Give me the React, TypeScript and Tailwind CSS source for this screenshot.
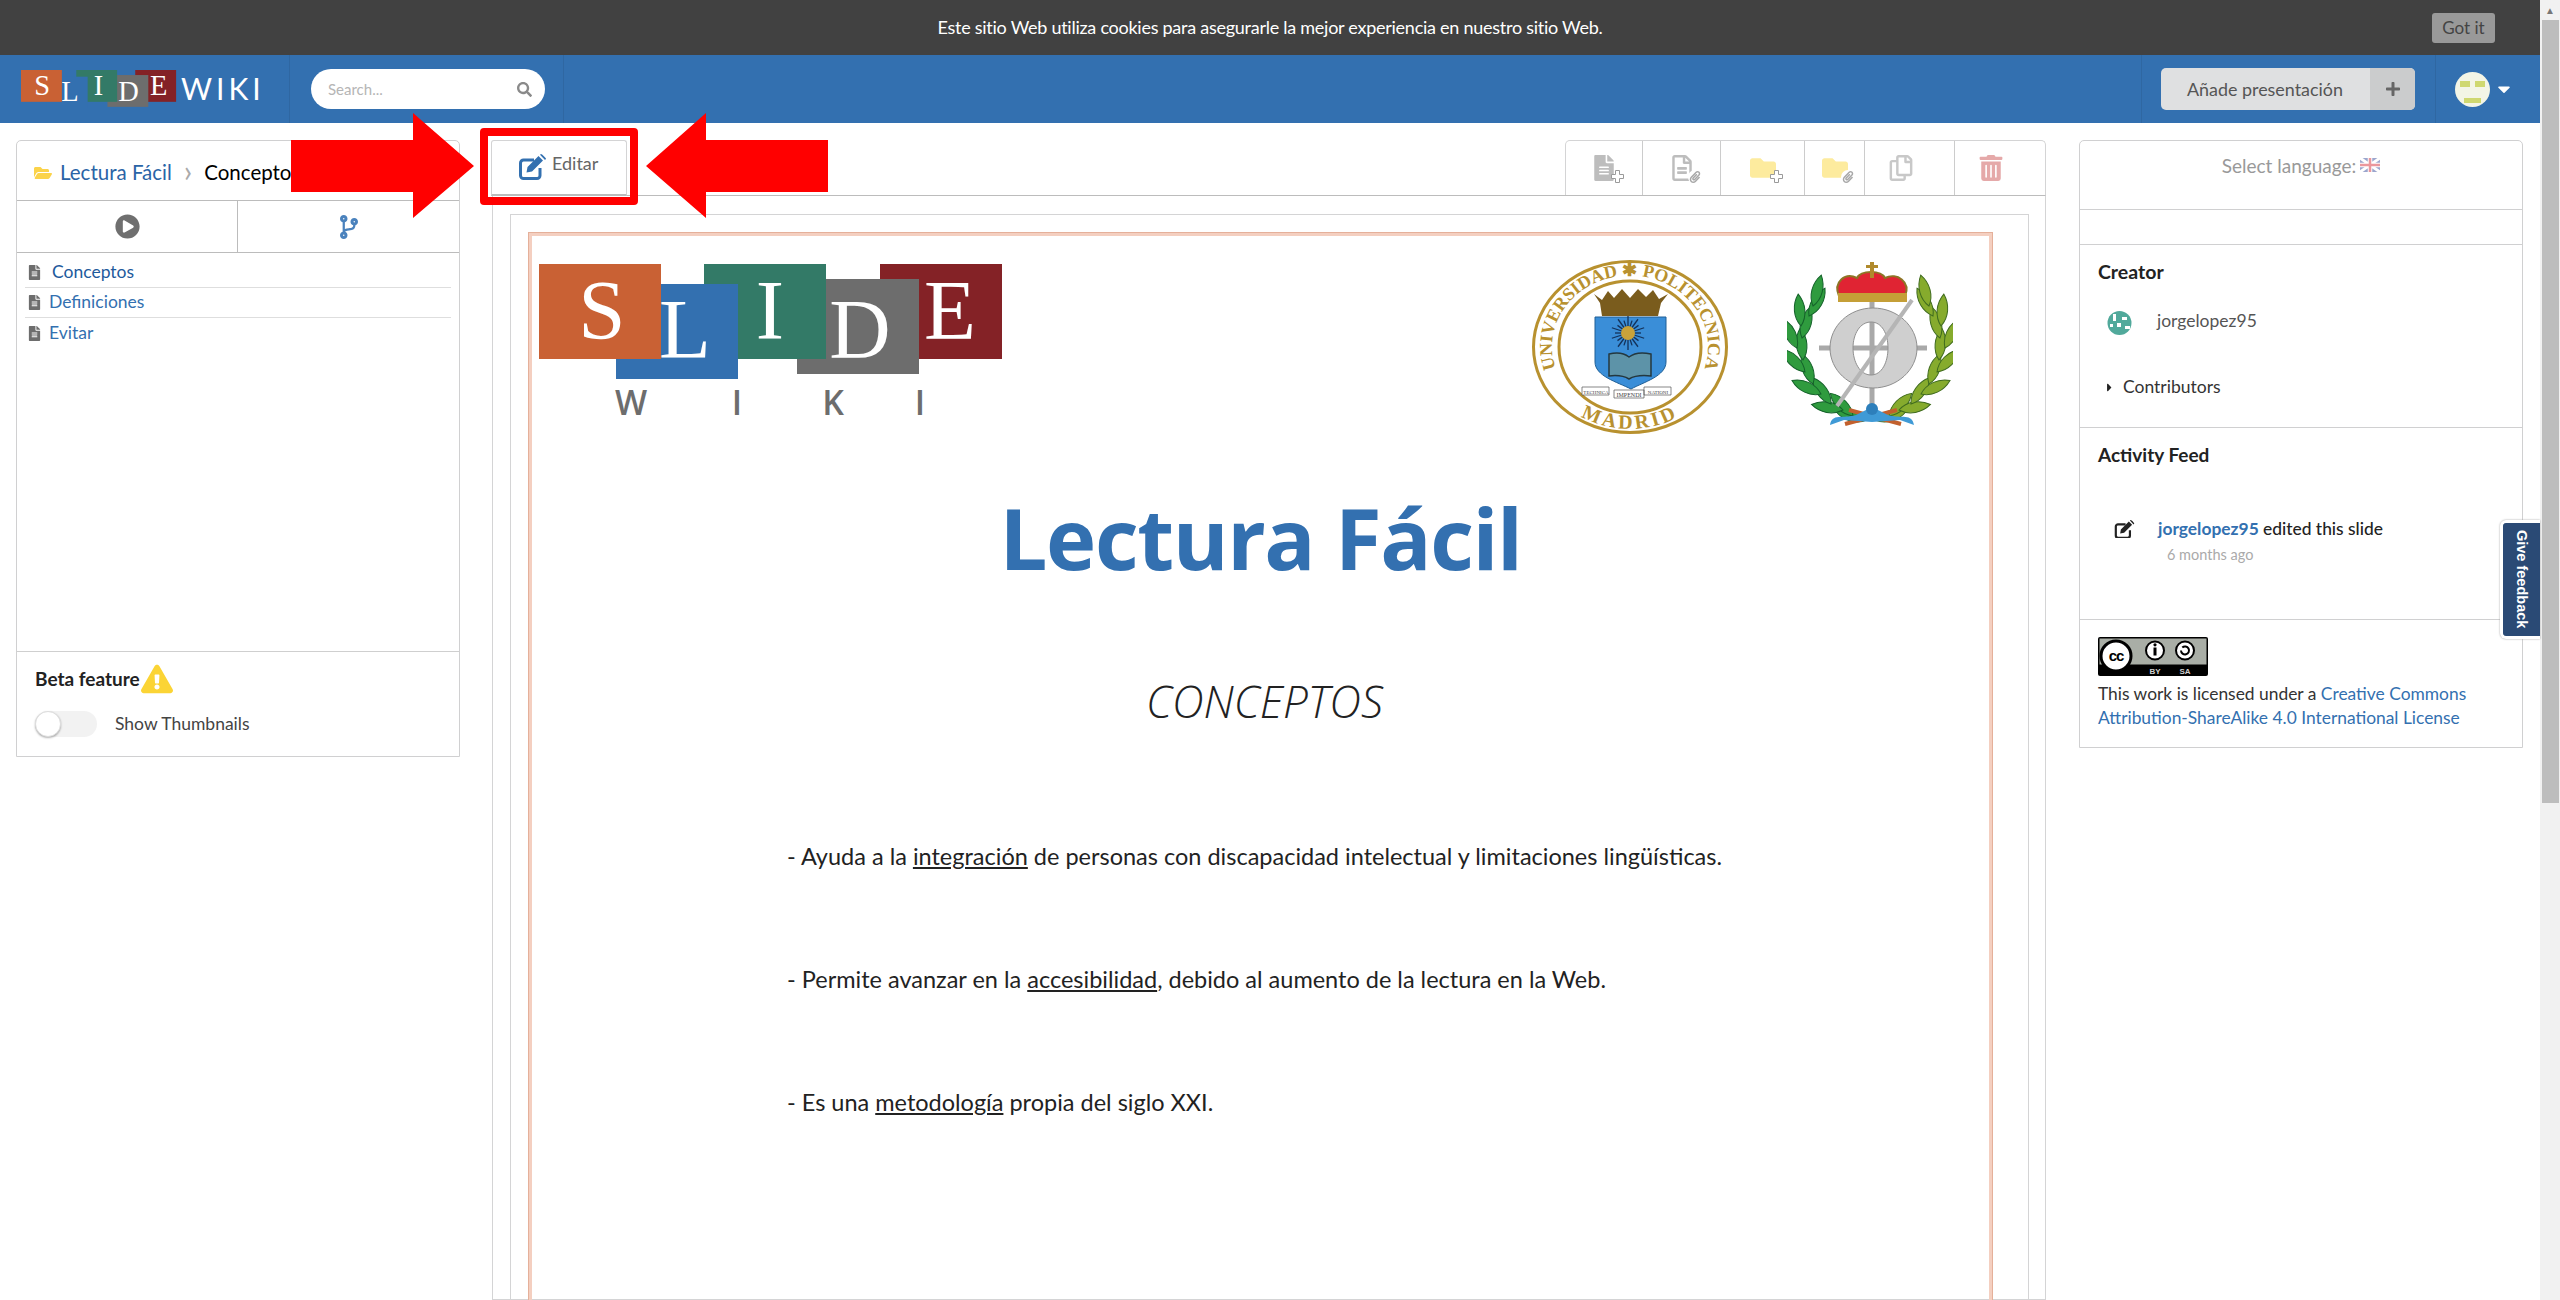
import {
  FaCaretDown,
  FaCaretRight,
  FaCodeBranch,
  FaExclamationTriangle,
  FaFileAlt,
  FaFolder,
  FaFolderOpen,
  FaPaperclip,
  FaPlayCircle,
  FaPlus,
  FaRegCopy,
  FaRegFileAlt,
  FaSearch,
  FaTrashAlt,
} from "react-icons/fa";

const blocks = [
  { x: 341, y: 0, fill: "#842226", l: "E", lx: 411, ly: 75 },
  { x: 258, y: 15, fill: "#6d6d6d", l: "D", lx: 321, ly: 94 },
  { x: 165, y: 0, fill: "#337a67", l: "I", lx: 231, ly: 75 },
  { x: 77, y: 20, fill: "#3370b0", l: "L", lx: 146, ly: 94 },
  { x: 0, y: 0, fill: "#c96134", l: "S", lx: 63, ly: 75 },
];

function Blocks() {
  return (
    <>
      {blocks.map((b) => (
        <g key={b.l}>
          <rect x={b.x} y={b.y} width="122" height="95" fill={b.fill} />
          <text
            x={b.lx}
            y={b.ly}
            fill="#fff"
            fontFamily="'Liberation Serif', serif"
            fontSize="85"
            textAnchor="middle"
          >
            {b.l}
          </text>
        </g>
      ))}
    </>
  );
}

function SmallLogo() {
  return (
    <svg width="243" height="38" viewBox="0 0 243 38">
      <g transform="scale(0.335)">
        <Blocks />
      </g>
      <text x="160" y="30" fill="#fff" fontFamily="Lato, sans-serif" fontSize="30" letterSpacing="4">
        WIKI
      </text>
    </svg>
  );
}

function BigLogo() {
  return (
    <svg width="463" height="155" viewBox="0 0 463 155">
      <Blocks />
      {[
        ["W", 92],
        ["I", 198],
        ["K", 294],
        ["I", 381],
      ].map(([l, x]) => (
        <text
          key={String(x)}
          x={x}
          y="151"
          fill="#6d6d6d"
          fontFamily="'Open Sans', sans-serif"
          fontSize="34"
          fontWeight="600"
          textAnchor="middle"
        >
          {l}
        </text>
      ))}
    </svg>
  );
}

function UpmSeal() {
  const rays = Array.from({ length: 20 }, (_, i) => i * 18);
  return (
    <svg width="196" height="175" viewBox="0 0 196 175">
      <ellipse cx="98" cy="87" rx="96.5" ry="85.5" fill="#fff" stroke="#b8912f" strokeWidth="3" />
      <ellipse cx="98" cy="87" rx="71" ry="66" fill="#fff" stroke="#b8912f" strokeWidth="3" />
      <defs>
        <path id="sealTop" d="M38 132A78 71 0 1 1 158 132" />
        <path id="sealBottom" d="M38 149A92 82 0 0 0 158 149" />
      </defs>
      <text fontFamily="'Liberation Serif', serif" fontSize="18" fontWeight="700" fill="#b8912f">
        <textPath href="#sealTop" startOffset="50%" textAnchor="middle">
          UNIVERSIDAD ✱ POLITECNICA
        </textPath>
      </text>
      <text fontFamily="'Liberation Serif', serif" fontSize="20" fontWeight="700" fill="#b8912f" letterSpacing="3">
        <textPath href="#sealBottom" startOffset="50%" textAnchor="middle">
          MADRID
        </textPath>
      </text>
      <path d="M62 34l8 6 6-9 6 7 8-9 8 9 8-9 8 8 7-7 6 9 9-5-7 9-3 13H70l-2-13z" fill="#7a5c1d" />
      <path d="M63 57h71v45c0 14-22 20-35 27-14-7-36-13-36-27z" fill="#3a8ed8" stroke="#1f5f96" strokeWidth="1" />
      {rays.map((r) => (
        <line
          key={r}
          x1="96"
          y1="73"
          x2="96"
          y2={r % 36 === 0 ? 56 : 60}
          stroke="#14325a"
          strokeWidth="1.3"
          transform={`rotate(${r} 96 73)`}
        />
      ))}
      <circle cx="96" cy="73" r="7" fill="#c8a23a" />
      <path d="M77 94c8-2 15-1 20 3 5-4 13-5 22-3v22c-9-1-17 0-22 3-5-3-12-4-20-3z" fill="#5d93a8" stroke="#24383f" strokeWidth="1.5" />
      <path d="M82 130h30v8H82zM50 127h27v8H50zM112 127h27v8h-27z" fill="#fff" stroke="#555" strokeWidth="0.7" />
      <text x="97" y="137" fontSize="6" textAnchor="middle" fill="#444" fontFamily="'Liberation Serif', serif">IMPENDI</text>
      <text x="64" y="134" fontSize="5" textAnchor="middle" fill="#444" fontFamily="'Liberation Serif', serif">TECHNICA</text>
      <text x="126" y="134" fontSize="5" textAnchor="middle" fill="#444" fontFamily="'Liberation Serif', serif">NATIONI</text>
    </svg>
  );
}

// leaves of one wreath branch: x, y, angle
const leaves = [
  [80, 160, -75],
  [66, 156, -45],
  [56, 150, -80],
  [44, 144, -35],
  [34, 134, -65],
  [26, 124, -20],
  [18, 112, -45],
  [16, 100, -5],
  [10, 88, -25],
  [15, 78, 15],
  [14, 66, -5],
  [22, 56, 30],
  [26, 46, 15],
];

function Branch({ fill, stroke, mirror }: { fill: string; stroke: string; mirror?: boolean }) {
  return (
    <g transform={mirror ? "translate(168 0) scale(-1 1)" : undefined}>
      {leaves.map(([x, y, r]) => (
        <path
          key={`${x}-${y}`}
          d="M0 0C-7-9-7-22 0-32 7-22 7-9 0 0z"
          fill={fill}
          stroke={stroke}
          strokeWidth="1"
          transform={`translate(${x} ${y}) rotate(${r})`}
        />
      ))}
    </g>
  );
}

function EiEmblem() {
  return (
    <svg width="166" height="167" viewBox="0 0 166 167">
      <Branch fill="#2f9b3e" stroke="#14612a" />
      <Branch fill="#86ab2d" stroke="#3f6b1f" mirror />
      <line x1="32" y1="88" x2="140" y2="88" stroke="#a9a9a9" strokeWidth="5" />
      <line x1="85" y1="40" x2="85" y2="148" stroke="#a9a9a9" strokeWidth="5" />
      <path
        fillRule="evenodd"
        d="M86 48c24 0 44 18 44 40s-20 40-44 40-43-18-43-40 19-40 43-40zm-2 14c-11 0-18 12-18 26s7 27 18 27 17-13 17-27-6-26-17-26z"
        fill="#cfcfcf"
        stroke="#8f8f8f"
        strokeWidth="1"
      />
      <line x1="50" y1="146" x2="125" y2="40" stroke="#b5b5b5" strokeWidth="4" />
      <path d="M52 36c-6-14 6-24 18-18 4-8 24-8 28 0 12-6 26 4 20 18z" fill="#e02433" stroke="#8d7425" strokeWidth="2" />
      <rect x="51" y="33" width="69" height="9" fill="#c59f37" />
      <rect x="83" y="2" width="4" height="16" fill="#b08a2c" />
      <rect x="79" y="5" width="12" height="3" fill="#b08a2c" />
      <path d="M62 150l52 14M110 150l-52 14" stroke="#c2602d" strokeWidth="4" />
      <path d="M43 165c2-12 12-6 26-10l16-8 16 8c14 4 24-2 26 10l-14-5-28 2-28-2z" fill="#3f9ad6" />
      <circle cx="85" cy="149" r="6" fill="#2d7fbb" />
    </svg>
  );
}

function Flag() {
  return (
    <svg width="20" height="14" viewBox="0 0 20 14" className="opacity-50">
      <rect width="20" height="14" fill="#3b4f9c" />
      <path d="M0 0l20 14M20 0L0 14" stroke="#fff" strokeWidth="3" />
      <path d="M10 0v14M0 7h20" stroke="#fff" strokeWidth="4.5" />
      <path d="M10 0v14M0 7h20" stroke="#d8323c" strokeWidth="2.5" />
    </svg>
  );
}

function CcBadge() {
  return (
    <svg width="110" height="39" viewBox="0 0 110 39">
      <rect width="110" height="39" rx="2" fill="#000" />
      <rect x="1.5" y="1.5" width="107" height="26" fill="#a9aea6" />
      <circle cx="18" cy="19" r="15" fill="#fff" stroke="#000" strokeWidth="3" />
      <text x="18" y="24" fontFamily="'Liberation Sans', sans-serif" fontWeight="700" fontSize="15" textAnchor="middle" letterSpacing="-1">cc</text>
      <circle cx="57" cy="13.5" r="9" fill="#fff" stroke="#000" strokeWidth="2" />
      <rect x="55.5" y="10.5" width="3" height="8" fill="#000" />
      <circle cx="57" cy="7.8" r="1.6" fill="#000" />
      <circle cx="87" cy="13.5" r="9" fill="#fff" stroke="#000" strokeWidth="2" />
      <path d="M83 13.5a4 4 0 1 0 1.3-3" fill="none" stroke="#000" strokeWidth="2" />
      <text x="57" y="37" fill="#d0d0d0" fontFamily="'Liberation Sans', sans-serif" fontWeight="700" fontSize="8" textAnchor="middle">BY</text>
      <text x="87" y="37" fill="#d0d0d0" fontFamily="'Liberation Sans', sans-serif" fontWeight="700" fontSize="8" textAnchor="middle">SA</text>
    </svg>
  );
}

// FA4 pencil-square: heavy rounded box with a solid pencil
function EditIcon({ size, color }: { size: number; color: string }) {
  return (
    <svg width={size} height={size * 0.9} viewBox="0 0 29 26">
      <path d="M16 6H5.5A3 3 0 0 0 2.5 9v12.5a3 3 0 0 0 3 3H19a3 3 0 0 0 3-3V14" fill="none" stroke={color} strokeWidth="3" />
      <path d="M8.5 18.5l1-5.5L20.5 2l4.5 4.5L14 17.5zM22 .8l1-.8c1 0 4.500 3.500 5 4.500 0 .5-.5 1-1 1.500z" fill={color} />
    </svg>
  );
}

function PlusMark() {
  return (
    <svg width="13" height="13" viewBox="0 0 13 13" className="absolute -bottom-[2px] -right-[7px]">
      <path d="M4.500.5h4v4h4v4h-4v4h-4v-4h-4v-4h4z" fill="#fff" stroke="#9a9a9a" />
    </svg>
  );
}

function ClipMark() {
  return (
    <span className="absolute -bottom-[3px] -right-[7px] rounded-full bg-white p-[1px]">
      <FaPaperclip className="text-[12px] text-[#a8a8a8]" />
    </span>
  );
}

function TreeItem({ label, active }: { label: string; active?: boolean }) {
  return (
    <div className={`flex h-[30px] items-center border-b border-[#dedede] last:border-b-0 ${active ? "gap-[10px]" : "gap-[7px]"}`}>
      <FaFileAlt className="ml-[2px] text-[15px] text-[#6d6d6d]" />
      <span className={`text-[17.5px] ${active ? "text-[#1e5a9c]" : "text-[#3370b0]"}`}>{label}</span>
    </div>
  );
}

const toolbar = [
  { w: "w-[77px]", icon: <FaFileAlt className="text-[26px] text-[#bdbdbd]" />, mark: <PlusMark /> },
  { w: "w-[78px]", icon: <FaRegFileAlt className="text-[26px] text-[#bdbdbd]" />, mark: <ClipMark /> },
  { w: "w-[84px]", icon: <FaFolder className="text-[26px] text-[#fdeb9e]" />, mark: <PlusMark /> },
  { w: "w-[60px]", icon: <FaFolder className="text-[26px] text-[#fdeb9e]" />, mark: <ClipMark /> },
  { w: "w-[90px] pr-[18px]", icon: <FaRegCopy className="text-[26px] text-[#c8c8c8]" /> },
  { w: "flex-1 pr-[18px]", icon: <FaTrashAlt className="text-[26px] text-[#e5a9a9]" /> },
];

export default function App() {
  return (
    <div className="flex h-[1300px] w-[2560px] overflow-hidden bg-white font-['Lato',sans-serif] text-[#222]">
      <div className="relative w-[2540px] flex-none">
        {/* cookie notice */}
        <div className="flex h-[55px] items-center bg-[#414141] pr-[45px]">
          <div className="flex-1 pl-[108px] text-center text-[18px] tracking-[-0.26px] text-white">
            Este sitio Web utiliza cookies para asegurarle la mejor experiencia en nuestro sitio Web.
          </div>
          <button className="h-[30px] w-[63px] rounded-[3px] bg-[#999] text-[17px] text-[#444]">Got it</button>
        </div>

        {/* navbar */}
        <div className="flex h-[68px] items-center bg-[#3370b0]">
          <div className="flex h-full w-[290px] items-center border-r border-[#2f67a2] pl-[21px]">
            <SmallLogo />
          </div>
          <div className="flex h-full w-[274px] items-center border-r border-[#2f67a2] pl-[21px]">
            <div className="flex h-[40px] w-[234px] items-center justify-between rounded-full bg-white pl-[17px] pr-[13px]">
              <span className="text-[15px] text-[#b5b5b5]">Search...</span>
              <FaSearch className="text-[15px] text-[#8a8a8a]" />
            </div>
          </div>
          <div className="flex-1" />
          <div className="flex h-full w-[295px] flex-none items-center border-x border-[#2f67a2] pl-[19px]">
            <div className="flex h-[42px] w-[254px] overflow-hidden rounded-[5px] bg-[#dfe0e1] text-[#555]">
              <span className="flex flex-1 items-center pl-[26px] text-[17.9px]">Añade presentación</span>
              <span className="flex w-[45px] items-center justify-center bg-[#cbcccd]">
                <FaPlus className="text-[16px] text-[#666]" />
              </span>
            </div>
          </div>
          <div className="flex h-full w-[104px] flex-none items-center pl-[19px]">
            <svg width="35" height="35" viewBox="0 0 35 35">
              <circle cx="17.5" cy="17.5" r="17.5" fill="#f3f5e6" />
              <rect x="5" y="9" width="10" height="6" fill="#cfd870" />
              <rect x="20" y="9" width="10" height="6" fill="#cfd870" />
              <rect x="9" y="26" width="17" height="5" fill="#cfd870" />
            </svg>
            <FaCaretDown className="ml-[4px] text-[20px] text-white" />
          </div>
        </div>

        {/* page body */}
        <div className="flex pl-[16px] pt-[17px]">
          <aside className="flex h-[617px] w-[444px] flex-none flex-col rounded-t-[5px] border border-[#d0d0d1]">
            <div className="flex h-[59px] flex-none items-center gap-[7px] pl-[17px] pt-[4px] text-[20.5px]">
              <FaFolderOpen className="text-[18px] text-[#fbd34a]" />
              <span className="ml-[1px] text-[#2a64a6]">Lectura Fácil</span>
              <span className="mx-[5px] -mt-[5px] text-[30px] leading-none text-[#aaa]">›</span>
              <span className="text-black">Conceptos</span>
            </div>
            <div className="flex h-[53px] flex-none border-y border-[#bcbcbc]">
              <div className="flex w-[221px] items-center justify-center border-r border-[#bcbcbc]">
                <FaPlayCircle className="text-[25px] text-[#6f6f6f]" />
              </div>
              <div className="flex flex-1 items-center justify-center">
                <FaCodeBranch className="text-[24px] text-[#4a82bd]" />
              </div>
            </div>
            <div className="flex-1 px-[8px] pt-[5px]">
              <TreeItem label="Conceptos" active />
              <TreeItem label="Definiciones" />
              <TreeItem label="Evitar" />
            </div>
            <div className="h-[105px] flex-none border-t border-[#cfcfcf] pl-[18px] pt-[11px]">
              <div className="flex items-center gap-[1px] text-[19px] font-bold text-[#222]">
                Beta feature
                <FaExclamationTriangle className="text-[32px] text-[#fbd435]" />
              </div>
              <div className="mt-[16px] flex items-center">
                <div className="relative h-[26px] w-[62px] rounded-full bg-[#f2f2f2]">
                  <div className="absolute left-0 top-0 h-[26px] w-[26px] rounded-full border border-[#ddd] bg-white shadow-[0_1px_2px_rgba(0,0,0,0.3)]" />
                </div>
                <span className="ml-[18px] text-[17.5px] text-[#444]">Show Thumbnails</span>
              </div>
            </div>
          </aside>

          <main className="ml-[32px] w-[1554px] flex-none">
            <div className="flex h-[55px] justify-between">
              <div className="-ml-[1px] flex h-[56px] w-[136px] items-center gap-[5px] rounded-t-[3px] border border-b-2 border-[#d4d4d5] border-b-[#bcbcbc] pl-[26px]">
                <EditIcon size={29} color="#3370b0" />
                <span className="-mt-[8px] text-[18px] text-[#666]">Editar</span>
              </div>
              <div className="flex h-[55px] w-[481px] rounded-t-[5px] border-x border-t border-[#d4d4d5]">
                {toolbar.map((t, i) => (
                  <div key={i} className={`flex items-center justify-center border-[#cccccc] not-last:border-r ${t.w}`}>
                    <span className="relative">
                      {t.icon}
                      {t.mark}
                    </span>
                  </div>
                ))}
              </div>
            </div>
            <div className="h-[1105px] border border-[#d4d4d5] border-t-[#bcbcbc] pl-[17px] pr-[16px] pt-[18px]">
              <div className="h-[1100px] border border-[#d4d4d5] pl-[18px] pr-[36px] pt-[18px]">
                <div className="h-[1100px] border-[3px] border-[#f4cfc0] pt-[28px] outline outline-1 outline-[#e5b09a]">
                  <div className="flex items-start pl-[7px]">
                    <BigLogo />
                    <div className="ml-[530px] -mt-[4px]">
                      <UpmSeal />
                    </div>
                    <div className="ml-[59px] -mt-[4px]">
                      <EiEmblem />
                    </div>
                  </div>
                  <h1 className="mt-[42px] text-center font-['Open_Sans',sans-serif] text-[85px] font-bold leading-[120px] tracking-[-1.4px] text-[#3370b0]">
                    Lectura Fácil
                  </h1>
                  <h2 className="mt-[74px] pl-[8px] text-center font-['Open_Sans',sans-serif] text-[44px] font-light italic leading-[60px] text-[#222]">
                    CONCEPTOS
                  </h2>
                  <div className="mt-[109px] pl-[255px] text-[23.5px] leading-[32px] text-[#222]">
                    <p>
                      - Ayuda a la <u>integración</u> de personas con discapacidad intelectual y limitaciones lingüísticas.
                    </p>
                    <p className="mt-[91px]">
                      - Permite avanzar en la <u>accesibilidad</u>, debido al aumento de la lectura en la Web.
                    </p>
                    <p className="mt-[91px]">
                      - Es una <u>metodología</u> propia del siglo XXI.
                    </p>
                  </div>
                </div>
              </div>
            </div>
          </main>

          <aside className="ml-[33px] h-[608px] w-[444px] flex-none rounded-t-[5px] border border-[#d0d0d1]">
            <div className="flex h-[68px] justify-center gap-[4px] pt-[11px] text-[19px] text-[#999]">
              Select language: <span className="mt-[6px]"><Flag /></span>
            </div>
            <div className="h-[36px] border-y border-[#d0d0d1]" />
            <div className="h-[183px] border-b border-[#d0d0d1] pl-[18px] pt-[15px]">
              <div className="text-[19.5px] font-bold leading-[24px] text-[#222]">Creator</div>
              <div className="mt-[27px] flex items-center pl-[9px]">
                <svg width="25" height="24" viewBox="0 0 25 24">
                  <circle cx="12.5" cy="12" r="12" fill="#51a99b" />
                  <rect x="6" y="3" width="3" height="7" fill="#fff" />
                  <rect x="15" y="6" width="5" height="3" fill="#fff" />
                  <rect x="10" y="12" width="4" height="4" fill="#fff" />
                  <rect x="3" y="13" width="3" height="3" fill="#fff" />
                  <rect x="18" y="15" width="5" height="3" fill="#fff" />
                </svg>
                <span className="ml-[25px] -mt-[4px] text-[17.5px] text-[#555]">jorgelopez95</span>
              </div>
              <div className="mt-[39px] flex items-center">
                <FaCaretRight className="ml-[5px] text-[13px] text-[#222]" />
                <span className="ml-[7px] text-[17.5px] text-[#333]">Contributors</span>
              </div>
            </div>
            <div className="h-[192px] border-b border-[#d0d0d1] pl-[18px] pt-[15px]">
              <div className="text-[19px] font-bold leading-[24px] text-[#222]">Activity Feed</div>
              <div className="mt-[50px] flex items-center pl-[16px]">
                <EditIcon size={21} color="#222" />
                <span className="ml-[23px] text-[17.4px] font-bold leading-[24px] text-[#222]">
                  <span className="text-[#3370b0]">jorgelopez95</span> <span className="font-medium">edited this slide</span>
                </span>
              </div>
              <div className="mt-[3px] pl-[69px] text-[14.5px] text-[#aaa]">6 months ago</div>
            </div>
            <div className="pl-[18px] pt-[17px]">
              <CcBadge />
              <p className="mt-[6px] text-[17.4px] leading-[24px] text-[#333]">
                This work is licensed under a <span className="text-[#3370b0]">Creative Commons</span>
                <br />
                <span className="text-[#3370b0]">Attribution-ShareAlike 4.0 International License</span>
              </p>
            </div>
          </aside>
        </div>

        {/* feedback tab */}
        <div className="absolute left-[2500px] top-[520px] flex h-[119px] w-[40px] items-center justify-center rounded-l-[6px] border-y-[3px] border-l-[3px] border-white bg-[#2a4a75] shadow-[0_0_2px_#999]">
          <span className="font-['Liberation_Sans',sans-serif] text-[14.5px] font-bold text-white [writing-mode:vertical-rl]">
            Give feedback
          </span>
        </div>

        {/* red annotations drawn over the page */}
        <svg className="pointer-events-none absolute left-[291px] top-[113px]" width="537" height="105" viewBox="0 0 537 105">
          <polygon points="0,27 122,27 122,0 183,53 122,105 122,79 0,79" fill="#ff0000" />
          <polygon points="537,27 415,27 415,0 355,53 415,105 415,79 537,79" fill="#ff0000" />
        </svg>
        <div className="pointer-events-none absolute left-[480px] top-[128px] h-[77px] w-[158px] rounded-[4px] border-[8px] border-[#ff0000]" />
      </div>

      {/* browser scrollbar */}
      <div className="flex w-[20px] flex-col items-center bg-[#f1f1f1]">
        <div className="flex h-[20px] items-center justify-center text-[10px] text-[#777]">▲</div>
        <div className="h-[783px] w-[17px] bg-[#bdbdbd]" />
      </div>
    </div>
  );
}
